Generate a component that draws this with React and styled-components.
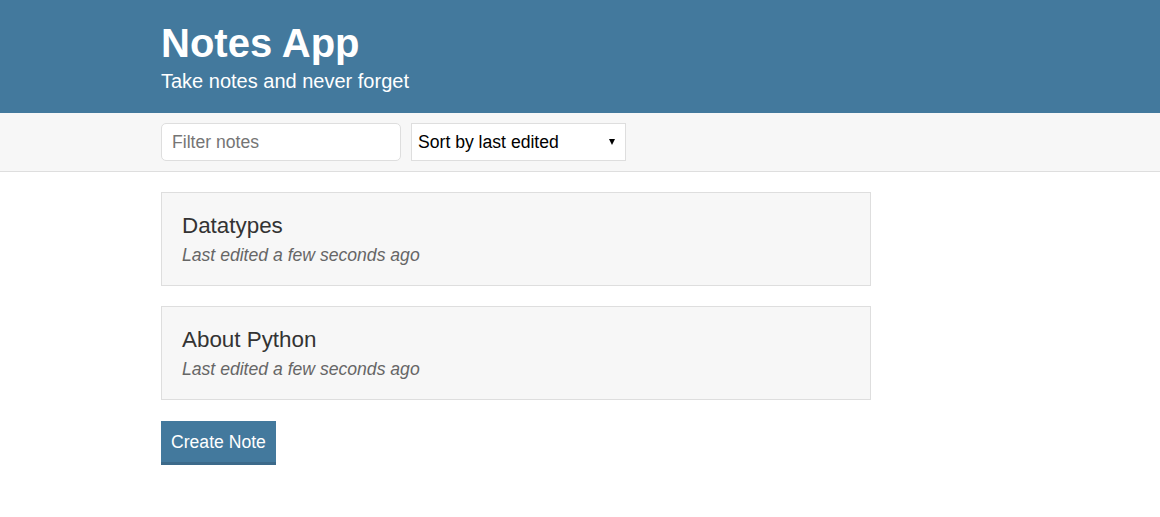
import React, { useState } from "react";
import styled, { createGlobalStyle } from "styled-components";

const GlobalStyle = createGlobalStyle`
  body {
    margin: 0;
    font-family: "Liberation Sans", Arial, sans-serif;
    color: #333333;
    background: #ffffff;
  }
  * {
    box-sizing: border-box;
  }
`;

const notes = [
  { id: 1, title: "Datatypes", edited: "Last edited a few seconds ago" },
  { id: 2, title: "About Python", edited: "Last edited a few seconds ago" },
];

const App = () => {
  const [filter, setFilter] = useState("");
  const [sortBy, setSortBy] = useState("byEdited");

  const visible = notes.filter((note) =>
    note.title.toLowerCase().includes(filter.toLowerCase())
  );

  return (
    <>
      <GlobalStyle />
      <Header>
        <Container>
          <Title>Notes App</Title>
          <Subtitle>Take notes and never forget</Subtitle>
        </Container>
      </Header>
      <Actions>
        <Container>
          <ActionsRow>
            <FilterInput
              type="text"
              placeholder="Filter notes"
              value={filter}
              onChange={(e) => setFilter(e.target.value)}
            />
            <SelectWrap>
              <SortSelect
                value={sortBy}
                onChange={(e) => setSortBy(e.target.value)}
              >
                <option value="byEdited">Sort by last edited</option>
                <option value="byCreated">Sort by recently created</option>
                <option value="alphabetical">Sort alphabetically</option>
              </SortSelect>
            </SelectWrap>
          </ActionsRow>
        </Container>
      </Actions>
      <Container>
        <NoteList>
          {visible.map((note) => (
            <NoteCard key={note.id} href="#">
              <NoteTitle>{note.title}</NoteTitle>
              <NoteMeta>{note.edited}</NoteMeta>
            </NoteCard>
          ))}
        </NoteList>
        <CreateButton>Create Note</CreateButton>
      </Container>
    </>
  );
};

const Container = styled.div`
  max-width: 838px;
  margin: 0 auto;
`;

const Header = styled.header`
  background: #43799d;
  color: #ffffff;
  padding: 19px 0 20px;
`;

const Title = styled.h1`
  margin: 0;
  font-size: 40px;
  line-height: 48px;
  font-weight: 700;
`;

const Subtitle = styled.h2`
  margin: 2px 0 0;
  font-size: 20px;
  line-height: 24px;
  font-weight: 400;
`;

const Actions = styled.div`
  background: #f7f7f7;
  border-bottom: 1px solid #dedede;
  padding: 10px 0;
`;

const ActionsRow = styled.div`
  display: flex;
  align-items: center;
  gap: 10px;
`;

const FilterInput = styled.input`
  width: 240px;
  height: 38px;
  padding: 0 10px;
  border: 1px solid #dedede;
  border-radius: 5px;
  background: #ffffff;
  font-family: inherit;
  font-size: 17.6px;
  color: #333333;
  outline: none;
  &::placeholder {
    color: #757575;
  }
`;

const SelectWrap = styled.div`
  position: relative;
  width: 215px;
  &::after {
    content: "";
    position: absolute;
    right: 11px;
    top: 16px;
    border-left: 3.5px solid transparent;
    border-right: 3.5px solid transparent;
    border-top: 6px solid #000000;
    pointer-events: none;
  }
`;

const SortSelect = styled.select`
  appearance: none;
  width: 100%;
  height: 38px;
  padding: 0 24px 0 6px;
  border: 1px solid #dedede;
  border-radius: 0;
  background: #ffffff;
  font-family: inherit;
  font-size: 17.6px;
  color: #000000;
  outline: none;
`;

const NoteList = styled.div`
  display: flex;
  flex-direction: column;
  gap: 20px;
  max-width: 710px;
  margin: 20px 0 21px;
`;

const NoteCard = styled.a`
  display: block;
  background: #f7f7f7;
  border: 1px solid #dedede;
  padding: 20px 20px 18px;
  text-decoration: none;
  color: #333333;
`;

const NoteTitle = styled.p`
  margin: 0;
  font-size: 22.4px;
  line-height: 26px;
  color: #333333;
`;

const NoteMeta = styled.p`
  margin: 4px 0 0;
  font-size: 17.6px;
  line-height: 24px;
  font-style: italic;
  color: #666666;
`;

const CreateButton = styled.button`
  background: #43799d;
  color: #ffffff;
  border: none;
  border-bottom: 3px solid #3c6a8a;
  padding: 10px 10px 9px;
  font-family: inherit;
  font-size: 17.6px;
  line-height: 22px;
  cursor: pointer;
`;

export default App;
